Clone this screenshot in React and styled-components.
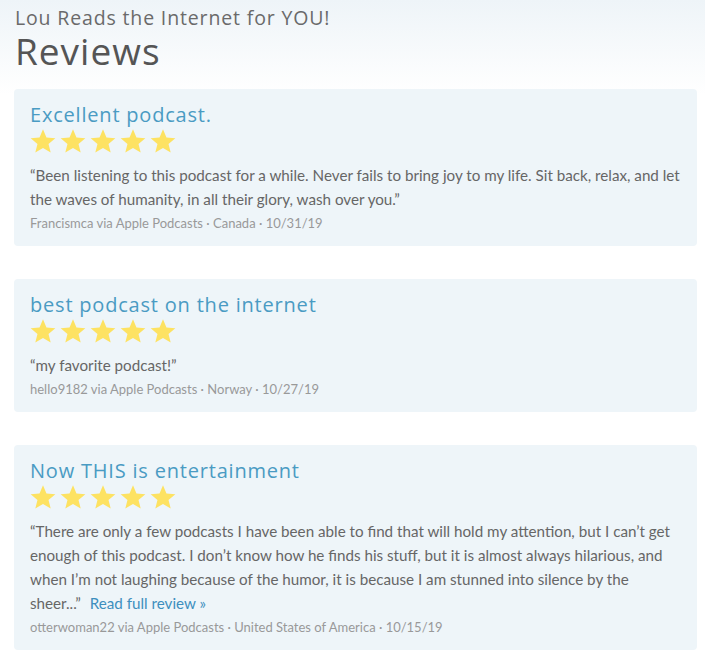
import React from "react";
import styled, { createGlobalStyle } from "styled-components";

const Global = createGlobalStyle`
  html, body { margin: 0; padding: 0; background: #fff; }
  body { font-family: "Lato", "Liberation Sans", sans-serif; }
`;

const Page = styled.div`
  min-height: 662px;
  background: linear-gradient(180deg, #eef4f8 0px, #ffffff 95px, #ffffff 100%);
  padding: 0 8px 12px 14px;
  box-sizing: border-box;
`;

const Header = styled.header`
  padding: 5px 0 0 1px;
  height: 89px;
  box-sizing: border-box;
`;

const Kicker = styled.div`
  font-family: "Open Sans", "Liberation Sans", sans-serif;
  font-size: 19.5px;
  line-height: 26px;
  color: #6a6a6a;
  letter-spacing: 0.85px;
`;

const Title = styled.h1`
  margin: 0;
  font-family: "Open Sans", "Liberation Sans", sans-serif;
  font-weight: 400;
  font-size: 37px;
  line-height: 40px;
  color: #555;
  letter-spacing: 1px;
`;

const List = styled.div`
  display: flex;
  flex-direction: column;
  gap: 33px;
`;

const Card = styled.article`
  background: #eef5f9;
  border-radius: 4px;
  padding: 14px 16px 11px;
`;

const ReviewTitle = styled.h2`
  margin: 0;
  font-family: "Open Sans", "Liberation Sans", sans-serif;
  font-weight: 400;
  font-size: 20px;
  line-height: 24px;
  letter-spacing: 0.8px;
  color: #4a9bc3;
`;

const Stars = styled.div`
  display: flex;
  gap: 4px;
  height: 28px;
  align-items: center;
`;

const Quote = styled.p`
  margin: 8px 0 0;
  font-size: 15.2px;
  line-height: 24px;
  color: #666;
`;

const ReadMore = styled.a`
  color: #3d8fbe;
  text-decoration: none;
  padding-left: 9px;
`;

const Meta = styled.div`
  font-size: 13px;
  line-height: 24px;
  color: #999;
`;

const Star = () => (
  <svg width="26" height="26" viewBox="0 0 24 24">
    <path
      d="M12 1.2l3.2 7.6 8.2.6-6.3 5.3 2 8-7.1-4.3-7.1 4.3 2-8L.6 9.4l8.2-.6z"
      fill="#fde262"
    />
  </svg>
);

const reviews = [
  {
    title: "Excellent podcast.",
    text:
      "“Been listening to this podcast for a while. Never fails to bring joy to my life. Sit back, relax, and let the waves of humanity, in all their glory, wash over you.”",
    meta: "Francismca via Apple Podcasts · Canada · 10/31/19",
  },
  {
    title: "best podcast on the internet",
    text: "“my favorite podcast!”",
    meta: "hello9182 via Apple Podcasts · Norway · 10/27/19",
  },
  {
    title: "Now THIS is entertainment",
    text:
      "“There are only a few podcasts I have been able to find that will hold my attention, but I can’t get enough of this podcast. I don’t know how he finds his stuff, but it is almost always hilarious, and when I’m not laughing because of the humor, it is because I am stunned into silence by the sheer...”",
    more: true,
    meta: "otterwoman22 via Apple Podcasts · United States of America · 10/15/19",
  },
];

export default function App() {
  return (
    <>
      <Global />
      <Page>
        <Header>
          <Kicker>Lou Reads the Internet for YOU!</Kicker>
          <Title>Reviews</Title>
        </Header>
        <List>
          {reviews.map((r) => (
            <Card key={r.title}>
              <ReviewTitle>{r.title}</ReviewTitle>
              <Stars>
                {[0, 1, 2, 3, 4].map((i) => (
                  <Star key={i} />
                ))}
              </Stars>
              <Quote>
                <span>{r.text}</span>
                {r.more && <ReadMore href="#">Read full review »</ReadMore>}
              </Quote>
              <Meta>{r.meta}</Meta>
            </Card>
          ))}
        </List>
      </Page>
    </>
  );
}
